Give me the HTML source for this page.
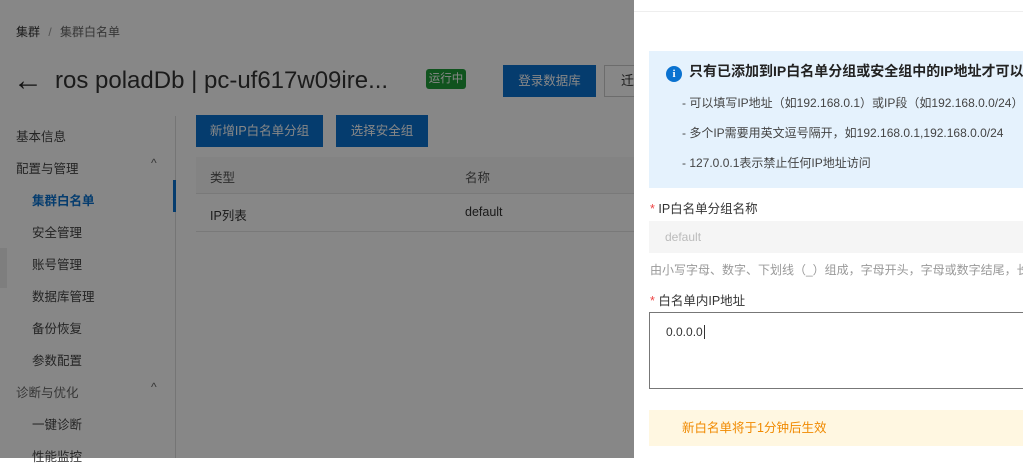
<!DOCTYPE html>
<html><head><meta charset="utf-8"><style>
*{margin:0;padding:0;box-sizing:border-box}
body{width:1023px;height:458px;overflow:hidden;position:relative;background:#fff;font-family:"Liberation Sans","Noto Sans CJK SC",sans-serif;color:#333;font-size:12px}
.a{position:absolute;white-space:nowrap}
.ov{position:absolute;left:0;top:0;width:634px;height:458px;background:rgba(0,0,0,0.47)}
.btn{position:absolute;background:#0a72d0;color:#fff;font-size:12.5px;text-align:center}
.nav{position:absolute;font-size:12.5px;color:#444}
.pn{position:absolute;left:634px;top:0;width:389px;height:458px;overflow:hidden;background:#fff}
</style></head><body>
<div class="a" style="left:16px;top:23px;font-size:12px;color:#333">集群 <span style="color:#999;margin:0 5px">/</span> <span style="color:#666">集群白名单</span></div>
<div class="a" style="left:13px;top:64px;font-size:30px;line-height:34px;color:#222">&#8592;</div>
<div class="a" style="left:55px;top:66px;font-size:24px;line-height:30px;color:#333">ros poladDb | pc-uf617w09ire...</div>
<div class="a" style="left:426px;top:69px;width:40px;height:20px;background:#1f9e3a;color:#fff;font-size:11.5px;line-height:20px;text-align:center;border-radius:3px">运行中</div>
<div class="btn" style="left:503px;top:65px;width:93px;height:32px;line-height:32px">登录数据库</div>
<div class="a" style="left:604px;top:65px;width:40px;height:32px;border:1px solid #ccc;line-height:30px;padding-left:16px;font-size:13px">迁</div>
<div class="nav" style="left:16px;top:126px">基本信息</div>
<div class="nav" style="left:16px;top:158px">配置与管理</div><div class="a" style="left:151px;top:156px;color:#666">^</div>
<div class="nav" style="left:32px;top:190px;color:#0a72d0;font-weight:bold">集群白名单</div>
<div class="nav" style="left:32px;top:222px">安全管理</div>
<div class="nav" style="left:32px;top:254px">账号管理</div>
<div class="nav" style="left:32px;top:286px">数据库管理</div>
<div class="nav" style="left:32px;top:318px">备份恢复</div>
<div class="nav" style="left:32px;top:350px">参数配置</div>
<div class="nav" style="left:16px;top:382px;color:#666">诊断与优化</div><div class="a" style="left:151px;top:380px;color:#666">^</div>
<div class="nav" style="left:32px;top:414px">一键诊断</div>
<div class="nav" style="left:32px;top:446px">性能监控</div>
<div class="a" style="left:175px;top:116px;width:1px;height:342px;background:#ddd"></div>
<div class="a" style="left:173px;top:180px;width:3px;height:32px;background:#0a72d0"></div>
<div class="btn" style="left:196px;top:115px;width:127px;height:32px;line-height:32px">新增IP白名单分组</div>
<div class="btn" style="left:336px;top:115px;width:92px;height:32px;line-height:32px">选择安全组</div>
<div class="a" style="left:196px;top:157px;width:438px;height:36px;background:#f7f7f7"></div>
<div class="a" style="left:210px;top:167px;font-size:12.5px;color:#555">类型</div>
<div class="a" style="left:465px;top:167px;font-size:12.5px;color:#555">名称</div>
<div class="a" style="left:196px;top:193px;width:438px;height:1px;background:#e5e5e5"></div>
<div class="a" style="left:210px;top:205px;font-size:12.5px">IP列表</div>
<div class="a" style="left:465px;top:205px;font-size:12.5px">default</div>
<div class="a" style="left:196px;top:231px;width:438px;height:1px;background:#e5e5e5"></div>
<div class="a" style="left:0;top:248px;width:7px;height:40px;background:#eee"></div>
<div class="ov"></div>

<div class="pn">
<div class="a" style="left:0;top:11px;width:389px;height:1px;background:#eee"></div>
<div class="a" style="left:15px;top:51px;width:374px;height:137px;background:#e5f2fd"></div>
<div class="a" style="left:32px;top:66px;width:16px;height:16px;border-radius:50%;background:#0a72d0;color:#fff;font-size:11px;font-weight:bold;text-align:center;line-height:16px;font-family:'Liberation Serif',serif">i</div>
<div class="a" style="left:55px;top:61px;font-size:14px;font-weight:bold;color:#222">只有已添加到IP白名单分组或安全组中的IP地址才可以访问</div>
<div class="a" style="left:48px;top:94px;color:#444;font-size:12px">- 可以填写IP地址（如192.168.0.1）或IP段（如192.168.0.0/24）</div>
<div class="a" style="left:48px;top:124px;color:#444;font-size:12px">- 多个IP需要用英文逗号隔开，如192.168.0.1,192.168.0.0/24</div>
<div class="a" style="left:48px;top:154px;color:#444;font-size:12px">- 127.0.0.1表示禁止任何IP地址访问</div>
<div class="a" style="left:16px;top:198px;font-size:12.5px"><span style="color:#e44">*</span> IP白名单分组名称</div>
<div class="a" style="left:15px;top:221px;width:374px;height:32px;background:#f5f5f5;color:#bbb;line-height:32px;padding-left:16px">default</div>
<div class="a" style="left:16px;top:261px;color:#999">由小写字母、数字、下划线（_）组成，字母开头，字母或数字结尾，长度为2~120个字符</div>
<div class="a" style="left:16px;top:290px;font-size:12.5px"><span style="color:#e44">*</span> 白名单内IP地址</div>
<div class="a" style="left:15px;top:312px;width:380px;height:77px;border:1px solid #777;padding:12px 16px;color:#333">0.0.0.0<span style="border-left:1px solid #333;margin-left:1px"></span></div>
<div class="a" style="left:15px;top:410px;width:374px;height:36px;background:#fff7e1;color:#f08a00;line-height:36px;padding-left:33px;font-size:12.5px">新白名单将于1分钟后生效</div>
</div>
</body></html>
